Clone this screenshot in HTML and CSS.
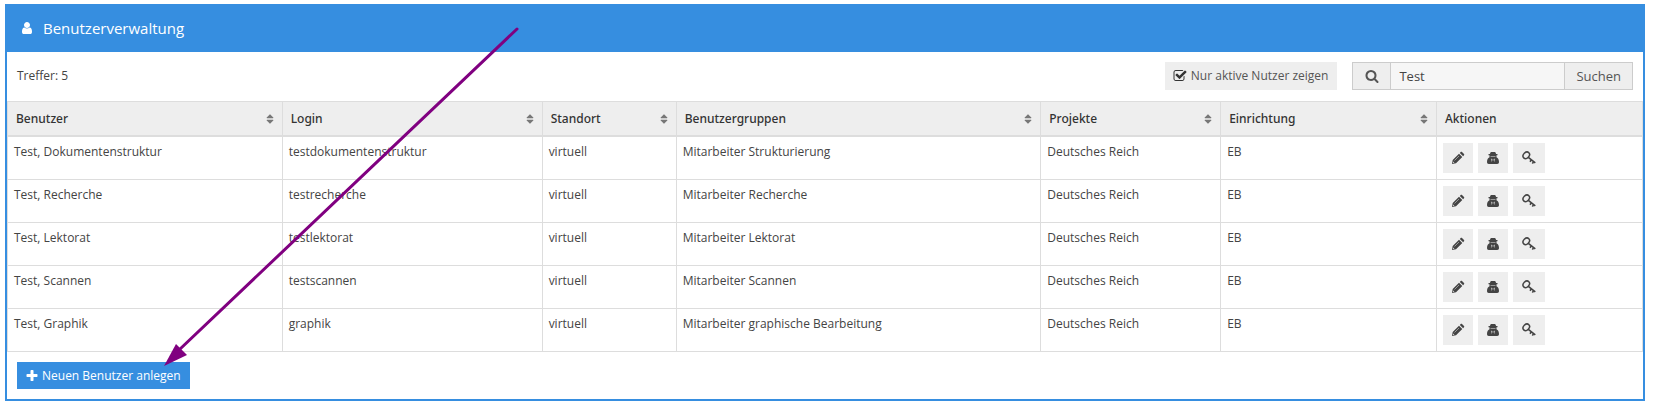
FILE: index.html
```html
<!DOCTYPE html>
<html lang="de">
<head>
  <meta charset="utf-8">
  <title>Benutzerverwaltung</title>
  <link rel="stylesheet" href="styles.css">
</head>
<body>
  <svg class="sprite" aria-hidden="true">
    <symbol id="icon-user" viewBox="0 0 1792 1792"><path d="M1536 1399q0 109-62.5 187t-150.5 78h-854q-88 0-150.5-78t-62.5-187q0-85 8.5-160.5t31.5-152 58.5-131 94-89 134.5-34.5q131 128 313 128t313-128q76 0 134.5 34.5t94 89 58.5 131 31.5 152 8.5 160.5zm-256-887q0 159-112.5 271.5t-271.5 112.5-271.5-112.5-112.5-271.5 112.5-271.5 271.5-112.5 271.5 112.5 112.5 271.5z"/></symbol>
    <symbol id="icon-check" viewBox="0 0 1792 1792"><path d="M1472 930v318q0 119-84.5 203.5t-203.5 84.5h-832q-119 0-203.5-84.5t-84.5-203.5v-832q0-119 84.5-203.5t203.5-84.5h832q63 0 117 25 15 7 18 23 3 17-9 29l-49 49q-10 10-23 10-3 0-9-2-23-6-45-6h-832q-66 0-113 47t-47 113v832q0 66 47 113t113 47h832q66 0 113-47t47-113v-254q0-13 9-22l64-64q10-10 23-10 6 0 12 3 20 8 20 29zm231-489l-814 814q-24 24-57 24t-57-24l-430-430q-24-24-24-57t24-57l110-110q24-24 57-24t57 24l263 263 647-647q24-24 57-24t57 24l110 110q24 24 24 57t-24 57z"/></symbol>
    <symbol id="icon-search" viewBox="0 0 1792 1792"><path d="M1216 832q0-185-131.5-316.5t-316.5-131.5-316.5 131.5-131.5 316.5 131.5 316.5 316.5 131.5 316.5-131.5 131.5-316.5zm512 832q0 52-38 90t-90 38q-54 0-90-38l-343-342q-179 124-399 124-143 0-273.5-55.5t-225-150-150-225-55.5-273.5 55.5-273.5 150-225 225-150 273.5-55.5 273.5 55.5 225 150 150 225 55.5 273.5q0 220-124 399l343 343q37 37 37 90z"/></symbol>
    <symbol id="icon-sort" viewBox="0 0 1792 1792"><path d="M1408 1088q0 26-19 45l-448 448q-19 19-45 19t-45-19l-448-448q-19-19-19-45t19-45 45-19h896q26 0 45 19t19 45zm0-384q0 26-19 45t-45 19h-896q-26 0-45-19t-19-45 19-45l448-448q19-19 45-19t45 19l448 448q19 19 19 45z"/></symbol>
    <symbol id="icon-pencil" viewBox="0 0 14 14"><path d="M1 13l.7-4L8 2.700l3.300 3.300L5 12.300zM8.800 1.900l.9-.9c.4-.4.900-.4 1.300 0l2 2c.4.4.4.900 0 1.300l-.9.9z"/><path d="M3.500 9.500l4.500-4.500" stroke="#eee" stroke-width=".5"/><path d="M2.200 10.600l1.200 1.200-1 .2-.4-.4z" fill="#eee"/></symbol>
    <symbol id="icon-plus" viewBox="0 0 1792 1792"><path d="M1600 736v192q0 40-28 68t-68 28h-416v416q0 40-28 68t-68 28h-192q-40 0-68-28t-28-68v-416h-416q-40 0-68-28t-28-68v-192q0-40 28-68t68-28h416v-416q0-40 28-68t68-28h192q40 0 68 28t28 68v416h416q40 0 68 28t28 68z"/></symbol>
    <symbol id="icon-secret" viewBox="0 0 14 14"><path fill-rule="evenodd" d="M4.500 1.500C5 .6 6 1 7 1s2-.4 2.500.5l.6 1.500h1.400v1.300h-1v1.900c1.700.8 2.500 2.500 2.500 4.800 0 1.300-.6 2-1.800 2H2.800C1.600 13 1 12.300 1 11c0-2.300.8-4 2.500-4.800V4.300h-1V3h1.400zM4.500 4.900v.6h5v-.6zM5.200 7.500l.6 3.500.7-2.600zM8.800 7.500l-.6 3.500-.7-2.600z"/></symbol>
    <symbol id="icon-key" viewBox="0 0 14 14"><g fill="none" stroke="currentColor"><ellipse cx="4.300" cy="4.300" rx="3.600" ry="2.800" transform="rotate(-45 4.300 4.300)" stroke-width="1.500"/><path d="M6.300 6.300l7 5.500M9.400 8.700L8 10.700M11.700 10.400L10.400 12.700" stroke-width="1.600"/></g></symbol>
  </svg>

  <div class="panel">
    <div class="panel-header">
      <svg class="icon"><use href="#icon-user"/></svg>
      <h1>Benutzerverwaltung</h1>
    </div>

    <div class="toolbar">
      <span class="hits">Treffer: 5</span>
      <form class="filter">
        <label class="toggle" for="active-only">
          <input type="checkbox" id="active-only" checked>
          <svg class="icon"><use href="#icon-check"/></svg>
          Nur aktive Nutzer zeigen
        </label>
        <div class="search">
          <label class="search-icon" for="search-input" aria-label="Suche"><svg class="icon"><use href="#icon-search"/></svg></label>
          <input type="text" id="search-input" value="Test">
          <button type="button">Suchen</button>
        </div>
      </form>
    </div>

    <table class="users">
      <colgroup>
        <col class="col-user">
        <col class="col-login">
        <col class="col-location">
        <col class="col-groups">
        <col class="col-projects">
        <col class="col-facility">
        <col>
      </colgroup>
      <thead>
        <tr>
          <th><button class="sort">Benutzer <svg class="icon"><use href="#icon-sort"/></svg></button></th>
          <th><button class="sort">Login <svg class="icon"><use href="#icon-sort"/></svg></button></th>
          <th><button class="sort">Standort <svg class="icon"><use href="#icon-sort"/></svg></button></th>
          <th><button class="sort">Benutzergruppen <svg class="icon"><use href="#icon-sort"/></svg></button></th>
          <th><button class="sort">Projekte <svg class="icon"><use href="#icon-sort"/></svg></button></th>
          <th><button class="sort">Einrichtung <svg class="icon"><use href="#icon-sort"/></svg></button></th>
          <th>Aktionen</th>
        </tr>
      </thead>
      <tbody>
        <tr>
          <td>Test, Dokumentenstruktur</td>
          <td>testdokumentenstruktur</td>
          <td>virtuell</td>
          <td>Mitarbeiter Strukturierung</td>
          <td>Deutsches Reich</td>
          <td>EB</td>
          <td>
            <div class="actions">
              <button aria-label="Bearbeiten"><svg class="icon"><use href="#icon-pencil"/></svg></button>
              <button aria-label="Anmelden als"><svg class="icon"><use href="#icon-secret"/></svg></button>
              <button class="key" aria-label="Passwort"><svg class="icon"><use href="#icon-key"/></svg></button>
            </div>
          </td>
        </tr>
        <tr>
          <td>Test, Recherche</td>
          <td>testrecherche</td>
          <td>virtuell</td>
          <td>Mitarbeiter Recherche</td>
          <td>Deutsches Reich</td>
          <td>EB</td>
          <td>
            <div class="actions">
              <button aria-label="Bearbeiten"><svg class="icon"><use href="#icon-pencil"/></svg></button>
              <button aria-label="Anmelden als"><svg class="icon"><use href="#icon-secret"/></svg></button>
              <button class="key" aria-label="Passwort"><svg class="icon"><use href="#icon-key"/></svg></button>
            </div>
          </td>
        </tr>
        <tr>
          <td>Test, Lektorat</td>
          <td>testlektorat</td>
          <td>virtuell</td>
          <td>Mitarbeiter Lektorat</td>
          <td>Deutsches Reich</td>
          <td>EB</td>
          <td>
            <div class="actions">
              <button aria-label="Bearbeiten"><svg class="icon"><use href="#icon-pencil"/></svg></button>
              <button aria-label="Anmelden als"><svg class="icon"><use href="#icon-secret"/></svg></button>
              <button class="key" aria-label="Passwort"><svg class="icon"><use href="#icon-key"/></svg></button>
            </div>
          </td>
        </tr>
        <tr>
          <td>Test, Scannen</td>
          <td>testscannen</td>
          <td>virtuell</td>
          <td>Mitarbeiter Scannen</td>
          <td>Deutsches Reich</td>
          <td>EB</td>
          <td>
            <div class="actions">
              <button aria-label="Bearbeiten"><svg class="icon"><use href="#icon-pencil"/></svg></button>
              <button aria-label="Anmelden als"><svg class="icon"><use href="#icon-secret"/></svg></button>
              <button class="key" aria-label="Passwort"><svg class="icon"><use href="#icon-key"/></svg></button>
            </div>
          </td>
        </tr>
        <tr>
          <td>Test, Graphik</td>
          <td>graphik</td>
          <td>virtuell</td>
          <td>Mitarbeiter graphische Bearbeitung</td>
          <td>Deutsches Reich</td>
          <td>EB</td>
          <td>
            <div class="actions">
              <button aria-label="Bearbeiten"><svg class="icon"><use href="#icon-pencil"/></svg></button>
              <button aria-label="Anmelden als"><svg class="icon"><use href="#icon-secret"/></svg></button>
              <button class="key" aria-label="Passwort"><svg class="icon"><use href="#icon-key"/></svg></button>
            </div>
          </td>
        </tr>
      </tbody>
    </table>

    <div class="panel-footer">
      <button class="add"><svg class="icon"><use href="#icon-plus"/></svg> Neuen Benutzer anlegen</button>
    </div>
  </div>

  <!-- arrow pointing at the add button -->
  <svg class="pointer" width="360" height="345" viewBox="0 0 360 345" aria-hidden="true">
    <path d="M356 7L18 328" stroke="#800080" stroke-width="3" stroke-linecap="round"/>
    <path d="M3 344L15 322L20 327L26 333Z" fill="#800080"/>
  </svg>
</body>
</html>
```
FILE: styles.css
```css
* {
  box-sizing: border-box;
}

body {
  margin: 0;
  padding: 4px 9px 4px 5px;
  font-family: "Open Sans", "Noto Sans", sans-serif;
  font-size: 12px;
  line-height: 18px;
  color: #444;
  background-color: #fff;
}

button,
input {
  margin: 0;
  font: inherit;
  color: inherit;
}

button {
  border: none;
  cursor: pointer;
}

.sprite {
  display: none;
}

.icon {
  width: 14px;
  height: 14px;
  flex: none;
  fill: currentColor;
}

.panel {
  border: 2px solid #368ee0;
}

.panel-header {
  display: flex;
  align-items: center;
  gap: 9px;
  height: 46px;
  padding: 0 13px 2px;
  color: #fff;
  background-color: #368ee0;
}

.panel-header h1 {
  margin: 0;
  font-size: 15px;
  font-weight: normal;
}

.toolbar {
  display: flex;
  justify-content: space-between;
  align-items: center;
  padding: 10px 10px 11px;
}

.filter {
  display: flex;
  gap: 15px;
}

.toggle {
  display: flex;
  align-items: center;
  gap: 4px;
  height: 28px;
  padding: 0 9px 0 8px;
  color: #555;
  background-color: #eee;
  cursor: pointer;
}

.toggle input {
  appearance: none;
  width: 0;
  height: 0;
  margin-right: -4px;
}

.toggle .icon {
  color: #333;
}

.search {
  display: flex;
  height: 28px;
  border: 1px solid #ccc;
  font-size: 13px;
}

.search-icon {
  display: flex;
  align-items: center;
  justify-content: center;
  width: 37px;
  color: #555;
  background-color: #eee;
}

.search input {
  width: 175px;
  padding: 0 8px;
  border: solid #ccc;
  border-width: 0 1px;
  background-color: #f6f6f6;
}

.search button {
  padding: 0 11px;
  color: #555;
  background-color: #eee;
}

.users {
  width: 100%;
  table-layout: fixed;
  border-collapse: separate;
  border-spacing: 0;
  border-top: 1px solid #ddd;
  border-left: 1px solid #ddd;
}

.col-user {
  width: 16.8%;
}

.col-login {
  width: 15.9%;
}

.col-location {
  width: 8.2%;
}

.col-groups {
  width: 22.3%;
}

.col-projects {
  width: 11%;
}

.col-facility {
  width: 13.2%;
}

.users th {
  height: 35px;
  padding: 0 8px;
  text-align: left;
  font-family: "Noto Sans", "Open Sans", sans-serif;
  font-weight: 500;
  color: #333;
  background-color: #eee;
  border-right: 1px solid #ddd;
  border-bottom: 2px solid #ddd;
}

.sort {
  display: flex;
  justify-content: space-between;
  align-items: center;
  width: 100%;
  padding: 0;
  background: none;
}

.sort .icon {
  width: 12px;
  height: 12px;
  color: #777;
  margin-right: -2px;
}

.users td {
  padding: 6px;
  vertical-align: top;
  border-right: 1px solid #ddd;
  border-bottom: 1px solid #ddd;
}

.actions {
  display: flex;
  gap: 5px;
}

.actions button {
  display: flex;
  align-items: center;
  justify-content: center;
  width: 30px;
  height: 30px;
  padding: 0;
  background-color: #eee;
}

.actions .key {
  width: 32px;
}

.panel-footer {
  padding: 10px;
}

.add {
  display: flex;
  align-items: center;
  gap: 3px;
  height: 27px;
  padding: 0 9px 0 8px;
  color: #fff;
  background-color: #368ee0;
}

/* lies over the table */
.pointer {
  position: absolute;
  top: 22px;
  left: 161px;
  pointer-events: none;
}
```
